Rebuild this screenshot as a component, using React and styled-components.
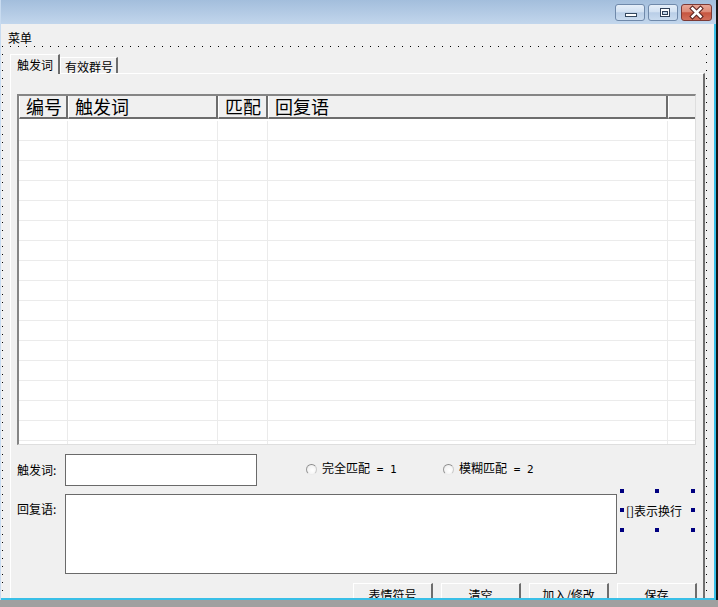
import React from 'react';
import styled, { createGlobalStyle } from 'styled-components';

const GlobalStyle = createGlobalStyle`
  *, *::before, *::after { box-sizing: border-box; }
  html, body { margin: 0; padding: 0; }
  body {
    width: 718px;
    height: 607px;
    overflow: hidden;
    background: #a0a0a0;
    font-family: "Noto Sans CJK SC", "Noto Sans", sans-serif;
    font-size: 12px;
    color: #000;
  }
`;

const Screen = styled.div`
  width: 718px;
  height: 607px;
  display: flex;
  flex-direction: column;
  background: #a0a0a0;
`;

const Frame = styled.div`
  display: flex;
  height: 600px;
  background: #151515;
`;

const Window = styled.div`
  width: 716px;
  height: 600px;
  display: flex;
  flex-direction: column;
  border-left: 1px solid #c8dbf0;
`;

const TitleBar = styled.div`
  height: 24px;
  flex: none;
  display: flex;
  justify-content: flex-end;
  align-items: flex-start;
  gap: 3px;
  padding: 4px 4px 0 0;
  background: linear-gradient(to bottom, #a3bedc 0%, #b4cbe5 55%, #c2d6ec 100%);
`;

const CaptionButton = styled.div`
  width: ${p => (p.$close ? 31 : 30)}px;
  height: 17px;
  border-radius: 3px;
  border: 1px solid ${p => (p.$close ? '#7d3a35' : '#6f89aa')};
  background: ${p =>
    p.$close
      ? 'linear-gradient(to bottom, #e9a796 0%, #dc8b78 45%, #c6553f 52%, #d2705c 100%)'
      : 'linear-gradient(to bottom, #e6eff9 0%, #d2e1f2 45%, #b9cee7 52%, #c9dbef 100%)'};
  display: flex;
  svg { display: block; }
`;

const Client = styled.div`
  flex: 1;
  min-height: 0;
  display: flex;
  flex-direction: column;
  overflow: hidden;
  background: #f0f0f0;
  border-right: 2px solid #39bfe7;
  border-bottom: 2px solid #39bfe7;
`;

const MenuBar = styled.div`
  height: 22px;
  flex: none;
  padding: 7px 0 0 7px;
  line-height: 13px;
`;

// design-time grid of the form (dots every 8px)
const Form = styled.div`
  flex: 1;
  min-height: 0;
  padding: 1px 0 0 2px;
  background-color: #f0f0f0;
  background-image:
    linear-gradient(90deg, #f0f0f0 7px, transparent 7px),
    linear-gradient(#f0f0f0 7px, #000 7px);
  background-size: 8px 8px;
  background-position: -6px -7px;
`;

const TabControl = styled.div`
  width: 702px;
  display: flex;
  flex-direction: column;
  padding: 7px 0 0 7px;
  background: #f0f0f0;
`;

const TabStrip = styled.div`
  height: 19px;
  display: flex;
  align-items: flex-end;
`;

const Tab = styled.div`
  position: relative;
  z-index: ${p => (p.$active ? 1 : 0)};
  width: ${p => p.$width}px;
  height: ${p => (p.$active ? 20 : 16)}px;
  margin-bottom: ${p => (p.$active ? -1 : 0)}px;
  padding: ${p => (p.$active ? '3px 0 0 6px' : '2px 0 0 4px')};
  line-height: 13px;
  white-space: nowrap;
  background: #f0f0f0;
  border-top: 1px solid #fff;
  border-left: 1px solid #fff;
  border-right: 2px solid #6d6d6d;
`;

const Panel = styled.div`
  height: 540px;
  display: flex;
  flex-direction: column;
  padding: 20px 6px 0 6px;
  background: #f0f0f0;
  border-top: 1px solid #fff;
  border-left: 1px solid #fff;
  border-right: 2px solid #707070;
`;

const COLS = '49px 150px 50px 400px 27px';

const Grid = styled.div`
  width: 679px;
  height: 351px;
  flex: none;
  display: flex;
  flex-direction: column;
  background: #fff;
  border-top: 2px solid #858585;
  border-left: 2px solid #858585;
  border-right: 1px solid #dedede;
  border-bottom: 1px solid #dedede;
`;

const HeaderRow = styled.div`
  display: grid;
  grid-template-columns: ${COLS};
  height: 23px;
  flex: none;
`;

const HeaderCell = styled.div`
  background: #f0f0f0;
  border-left: 1px solid #fff;
  border-right: ${p => (p.$last ? 'none' : '2px solid #6d6d6d')};
  border-bottom: 2px solid #6d6d6d;
  padding-left: 6px;
  font-size: 18px;
  line-height: 21px;
  white-space: nowrap;
`;

const GridBody = styled.div`
  flex: 1;
  min-height: 0;
  overflow: hidden;
  padding-top: 2px;
`;

const GridRow = styled.div`
  display: grid;
  grid-template-columns: ${COLS};
  height: 20px;
`;

const GridCell = styled.div`
  border-right: ${p => (p.$last ? 'none' : '1px solid #ebebeb')};
  border-bottom: 1px solid #ebebeb;
`;

const FieldRow = styled.div`
  display: flex;
  align-items: ${p => (p.$top ? 'flex-start' : 'center')};
  margin-top: ${p => p.$gap}px;
  height: ${p => p.$height}px;
  flex: none;
`;

const FieldLabel = styled.div`
  width: 48px;
  flex: none;
  padding-top: ${p => p.$pad || 0}px;
  line-height: 14px;
`;

const TextBox = styled.div`
  width: ${p => p.$width}px;
  height: ${p => p.$height}px;
  flex: none;
  background: #fff;
  border: 1px solid #6a6a6a;
`;

const RadioGroup = styled.div`
  display: flex;
  margin-left: 49px;
  margin-top: -2px;
`;

const RadioOption = styled.label`
  width: 137px;
  display: flex;
  align-items: center;
  gap: 5px;
  white-space: nowrap;
  line-height: 14px;
`;

const RadioDot = styled.span`
  width: 11px;
  height: 11px;
  flex: none;
  border-radius: 50%;
  border: 1px solid;
  border-color: #8a8a8a #c9c9c9 #ececec #999;
  background: radial-gradient(circle at 60% 60%, #fff 0%, #f3f3f3 60%, #e2e2e2 100%);
`;

const Mono = styled.span`
  font-family: "DejaVu Sans Mono", "Liberation Mono", monospace;
  font-size: 11px;
  white-space: pre;
`;

const SelectedLabel = styled.div`
  position: relative;
  width: 75px;
  height: 43px;
  flex: none;
  margin: -5px 0 0 3px;
  display: flex;
  align-items: center;
  padding-left: 6px;
  white-space: nowrap;
  line-height: 14px;
`;

const Handle = styled.span`
  position: absolute;
  width: 4px;
  height: 4px;
  background: #000080;
  left: ${p => p.$x}px;
  top: ${p => p.$y}px;
`;

const ButtonRow = styled.div`
  display: flex;
  justify-content: flex-end;
  gap: 8px;
  margin-top: 9px;
  flex: none;
`;

const FormButton = styled.div`
  width: 80px;
  height: 24px;
  display: flex;
  align-items: center;
  justify-content: center;
  background: #f0f0f0;
  border-top: 1px solid #fff;
  border-left: 1px solid #fff;
  border-right: 2px solid #6d6d6d;
  border-bottom: 2px solid #6d6d6d;
  white-space: nowrap;
`;

const columns = ['编号', '触发词', '匹配', '回复语', ''];
const handles = [
  [0, 0], [35, 0], [71, 0],
  [0, 19], [71, 19],
  [0, 39], [35, 39], [71, 39],
];

const MinimizeGlyph = () => (
  <svg width="28" height="15" viewBox="0 0 28 15">
    <rect x="9.5" y="8.5" width="11" height="3" fill="#fff" stroke="#34485f" />
  </svg>
);

const MaximizeGlyph = () => (
  <svg width="28" height="15" viewBox="0 0 28 15">
    <rect x="11.5" y="3.5" width="9" height="8" fill="#fff" stroke="#2f4058" />
    <rect x="13.5" y="6.5" width="5" height="3" fill="#c4d6ea" stroke="#2f4058" />
  </svg>
);

const CloseGlyph = () => (
  <svg width="29" height="15" viewBox="0 0 29 15">
    <path d="M10.5 3.5 L18.5 11.5 M18.5 3.5 L10.5 11.5" stroke="#5b2420" strokeWidth="4.6" strokeLinecap="square" />
    <path d="M10.5 3.5 L18.5 11.5 M18.5 3.5 L10.5 11.5" stroke="#fff" strokeWidth="2.6" strokeLinecap="square" />
  </svg>
);

export default function App() {
  const rows = Array.from({ length: 17 });
  return (
    <>
      <GlobalStyle />
      <Screen>
        <Frame>
          <Window>
            <TitleBar>
              <CaptionButton><MinimizeGlyph /></CaptionButton>
              <CaptionButton><MaximizeGlyph /></CaptionButton>
              <CaptionButton $close><CloseGlyph /></CaptionButton>
            </TitleBar>
            <Client>
              <MenuBar>菜单</MenuBar>
              <Form>
                <TabControl>
                  <TabStrip>
                    <Tab $active $width={50}>触发词</Tab>
                    <Tab $width={58}>有效群号</Tab>
                  </TabStrip>
                  <Panel>
                    <Grid>
                      <HeaderRow>
                        {columns.map((c, i) => (
                          <HeaderCell key={i} $last={i === columns.length - 1}>{c}</HeaderCell>
                        ))}
                      </HeaderRow>
                      <GridBody>
                        {rows.map((_, r) => (
                          <GridRow key={r}>
                            {columns.map((c, i) => (
                              <GridCell key={i} $last={i === columns.length - 1} />
                            ))}
                          </GridRow>
                        ))}
                      </GridBody>
                    </Grid>

                    <FieldRow $gap={9} $height={32}>
                      <FieldLabel>触发词:</FieldLabel>
                      <TextBox $width={192} $height={32} />
                      <RadioGroup>
                        <RadioOption>
                          <RadioDot />
                          <span>完全匹配<Mono> = 1</Mono></span>
                        </RadioOption>
                        <RadioOption>
                          <RadioDot />
                          <span>模糊匹配<Mono> = 2</Mono></span>
                        </RadioOption>
                      </RadioGroup>
                    </FieldRow>

                    <FieldRow $top $gap={8} $height={80}>
                      <FieldLabel $pad={8}>回复语:</FieldLabel>
                      <TextBox $width={552} $height={80} />
                      <SelectedLabel>
                        []表示换行
                        {handles.map(([x, y], i) => (
                          <Handle key={i} $x={x} $y={y} />
                        ))}
                      </SelectedLabel>
                    </FieldRow>

                    <ButtonRow>
                      <FormButton>表情符号</FormButton>
                      <FormButton>清空</FormButton>
                      <FormButton>加入/修改</FormButton>
                      <FormButton>保存</FormButton>
                    </ButtonRow>
                  </Panel>
                </TabControl>
              </Form>
            </Client>
          </Window>
        </Frame>
      </Screen>
    </>
  );
}
